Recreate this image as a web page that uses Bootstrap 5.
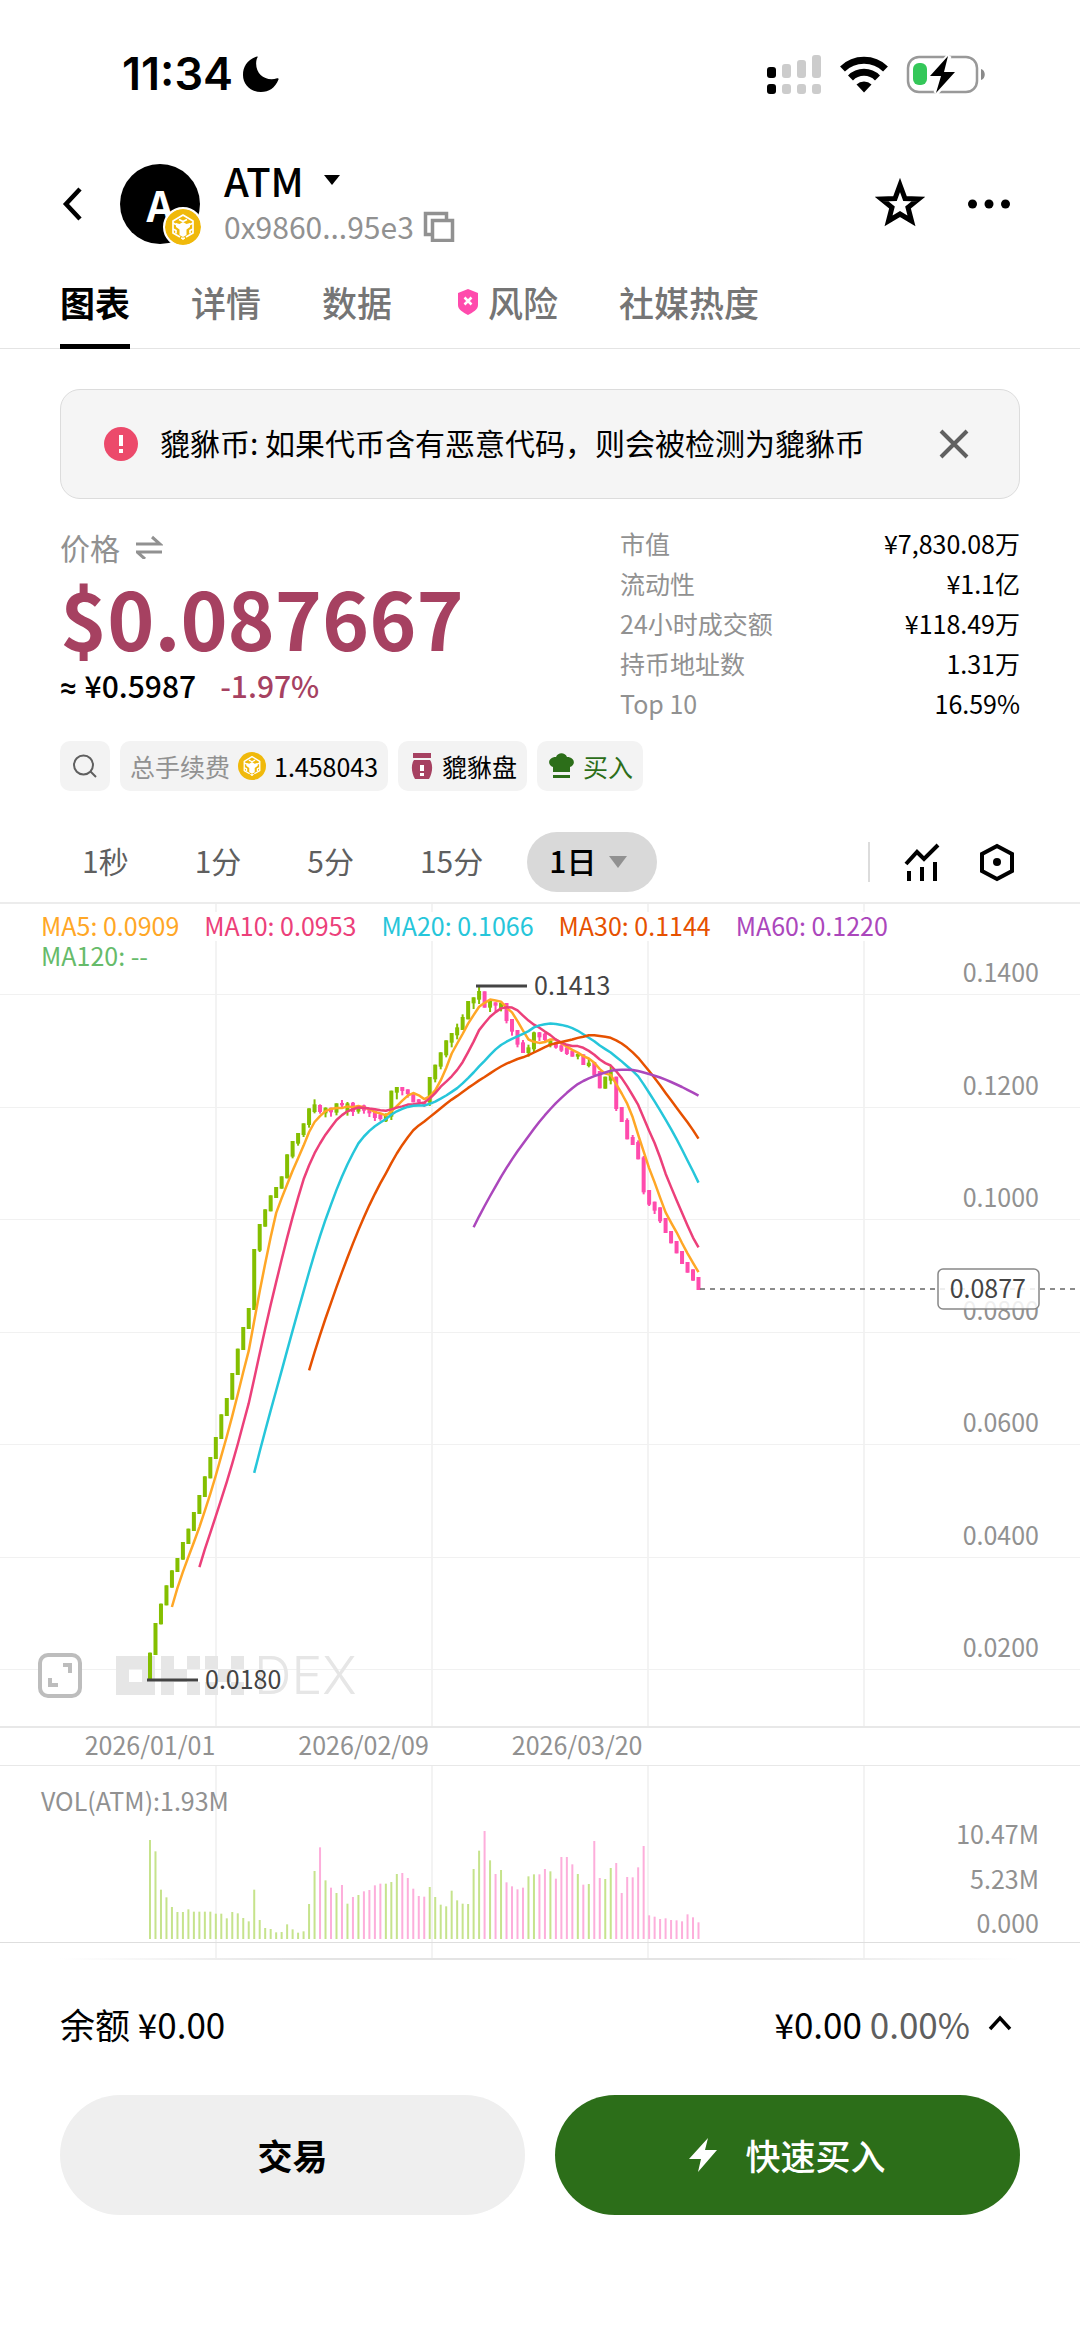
<!DOCTYPE html>
<html lang="zh-CN">
<head>
<meta charset="utf-8">
<meta name="viewport" content="width=device-width, initial-scale=1">
<title>ATM</title>
<link href="https://cdn.jsdelivr.net/npm/bootstrap@5.3.0/dist/css/bootstrap.min.css" rel="stylesheet">
<style>
  :root { --muted: #919191; --soft: #5f5f5f; --down: #a64161; --green: #2c6e19; --line: #e8e8e8; }
  body { font-family: "Noto Sans CJK SC", sans-serif; font-size: 25px; line-height: 40px; color: #000; background: #fff; }
  a { color: inherit; text-decoration: none; }
  svg { display: block; flex: none; }
  button { color: inherit; }
  .side { padding-left: 60px; padding-right: 60px; }
  .plain { border: 0; background: none; padding: 0; }
  .t30 { font-size: 30px; }
  .t35 { font-size: 35px; }
  .muted { color: var(--muted); }
  .down { color: var(--down); }
  .medium { font-weight: 500; }

  .statusbar { height: 147px; padding: 0 94px 0 122px; }
  .clock { font: 600 45px/56px Inter, sans-serif; }

  .topbar { height: 113px; }
  .avatar { width: 80px; height: 80px; border-radius: 50%; background: #000; color: #fff; font-size: 42px; font-weight: 700; }
  .chain { position: absolute; right: -3px; bottom: -3px; width: 40px; height: 40px; border: 2px solid #fff; border-radius: 50%; background: #fff; }
  .names { padding-bottom: 3px; }
  .token { font-size: 40px; line-height: 48px; }
  .addr { line-height: 44px; }
  .more { margin-left: 41px; }

  .tabs { gap: 61px; border-bottom: 1px solid #e4e4e4; }
  .tabs a { padding: 16px 0; line-height: 52px; color: #757575; border-bottom: 5px solid transparent; margin-bottom: -1px; }
  .tabs a.current { color: #000; font-weight: 700; border-color: #000; }

  .notice { margin-top: 40px; min-height: 110px; padding: 0 50px 0 43px; background: #f5f5f5; border: 1px solid #dcdcdc; border-radius: 20px; }
  .notice-text { margin-left: 22px; padding-bottom: 4px; }

  .quote { margin-top: 24px; }
  .quote-main { padding-top: 4px; }
  .big { margin-top: 2px; font-size: 80px; line-height: 94px; }
  .approx { line-height: 44px; gap: 24px; }
  .approx-sign { font-family: Roboto, sans-serif; }
  .stats { width: 400px; }

  .chips { margin-top: 18px; gap: 10px; }
  .chip { height: 50px; padding: 0 10px; gap: 8px; background: #f3f3f3; border-radius: 10px; }
  .chip-find { width: 50px; }

  .ranges { margin-top: 41px; padding: 0 63px 10px 60px; border-bottom: 2px solid #ececec; }
  .range { height: 60px; padding: 0 22px 4px; margin-right: 22px; color: var(--soft); }
  .range-on { height: 60px; padding: 0 30px 0 22px; gap: 13px; border-radius: 30px; background: #d9d9d9; color: #000; }
  .range-on span { padding-bottom: 4px; }
  .rule { width: 2px; height: 40px; background: #dcdcdc; }
  .gear { margin-left: 35px; }

  .legend { position: absolute; left: 0; top: 6px; right: 0; padding: 0 150px 0 41px; column-gap: 25px; line-height: 30px; }
  .plot { width: 100%; height: auto; }
  .plot text { font-family: "Noto Sans CJK SC", sans-serif; font-size: 25px; fill: var(--muted); }
  .plot .tag { fill: #444; }
  .plot .wm { font-family: Inter, sans-serif; font-size: 52px; font-weight: 300; fill: #e6e6e6; }
  .expand { position: absolute; left: 38px; bottom: 28px; }
  .dates { height: 40px; padding-left: 4%; border-top: 2px solid var(--line); border-bottom: 1px solid var(--line); }
  .dates > span { width: 20.600%; line-height: 32px; text-align: center; }
  .fade-line { height: 2px; margin: 0 60px; background: linear-gradient(90deg, #fff, #e4e4e4 25%, #e4e4e4 75%, #fff); }

  .balance { margin-top: 38px; line-height: 52px; }
  .actions { margin-top: 45px; gap: 30px; padding-bottom: 120px; }
  .act { height: 120px; border-radius: 60px; gap: 28px; font-size: 35px; font-weight: 500; }
  .act-trade, .act-trade:hover { background: #efefef; color: #000; font-weight: 700; }
  .act-buy, .act-buy:hover { background: var(--green); color: #fff; }
</style>
<script src="https://cdn.jsdelivr.net/npm/bootstrap@5.3.0/dist/js/bootstrap.bundle.min.js"></script>
</head>
<body>

<svg width="0" height="0" class="position-absolute" aria-hidden="true">
  <symbol id="bnb" viewBox="0 0 36 36">
    <circle cx="18" cy="18" r="18" fill="#f0b90b"/>
    <g fill="none" stroke="#fff" stroke-width="1.700" stroke-linejoin="round">
      <path d="M15 28l-7-4V12l10-6 10 6v12l-7 4"/>
      <path d="M14 10.500l4 2 4-2M8 14l4 2v2M28 14l-4 2v2M8 20l3 1.500v3M28 20l-3 1.500v3"/>
    </g>
    <path d="M18 13l3.500 2 3.500-1v4l-3.500 2.500V26L18 28l-3.500-2v-5.500L11 18v-4l3.500 1z" fill="#fff"/>
    <path d="M16 29h4l-2 1.500z" fill="#fff" stroke="#fff"/>
  </symbol>
</svg>

<div class="statusbar d-flex align-items-center justify-content-between">
  <div class="d-flex align-items-center gap-2">
    <span class="clock">11:34</span>
    <svg width="40" height="38" viewBox="0 0 40 38"><path d="M16 1.500C6 5 2 12 2 20c0 10 8 17 18 17 8 0 14-4 17.500-12.500.4-1-.4-1.600-1.400-1.200C24 27 13 18 15.500 5c.3-1.200.6-2 1-2.600.3-.7.200-1.200-.5-.9z"/></svg>
  </div>
  <div class="d-flex align-items-center">
    <svg width="55" height="40" viewBox="0 0 55 40">
      <g><rect x="0" y="13" width="9" height="11" rx="3"/><rect x="0" y="30" width="9" height="10" rx="3"/></g>
      <g fill="#ccc"><rect x="15" y="10" width="9" height="14" rx="3"/><rect x="30" y="6" width="9" height="18" rx="3"/><rect x="45" y="1" width="9" height="23" rx="3"/><rect x="15" y="30" width="9" height="10" rx="3"/><rect x="30" y="30" width="9" height="10" rx="3"/><rect x="45" y="30" width="9" height="10" rx="3"/></g>
    </svg>
    <svg class="mx-3" width="52" height="38" viewBox="0 0 52 38"><g fill="none" stroke="#000" stroke-width="7"><path d="M4.500 14a31 31 0 0 1 43 0"/><path d="M12.500 23a19 19 0 0 1 27 0"/></g><path d="M18.500 29.500a11 11 0 0 1 15 0L26 37.500z"/></svg>
    <svg width="80" height="40" viewBox="0 0 80 40">
      <rect x="2" y="3" width="69" height="35" rx="11" fill="none" stroke="#999" stroke-width="2.500"/>
      <path d="M75 15c5 1 5 10 0 11z" fill="#8a8a8a"/>
      <path d="M43 2L24 22h11l-5 17 19-21H38z" stroke="#fff" stroke-width="5"/>
      <rect x="7" y="9" width="14" height="22" rx="6" fill="#34c759"/>
      <path d="M42 2L24 22h11l-5 17 19-21H38z"/>
    </svg>
  </div>
</div>

<header class="topbar side d-flex align-items-center">
  <button class="plain" aria-label="返回"><svg width="60" height="40" viewBox="0 0 60 40"><path d="M20 5L6 20l14 15" fill="none" stroke="#000" stroke-width="4.500"/></svg></button>
  <div class="avatar position-relative d-flex align-items-center justify-content-center">A<svg class="chain"><use href="#bnb"/></svg></div>
  <div class="names ms-4">
    <button class="plain token medium d-flex align-items-center gap-3">ATM<svg width="24" height="12" viewBox="0 0 24 12"><path d="M4 1h16l-8 10z"/></svg></button>
    <div class="addr t30 muted d-flex align-items-center">0x9860...95e3
      <button class="plain ms-2" aria-label="复制"><svg width="34" height="32" viewBox="1 -1 34 32"><path d="M10.500 23.500H4.500V2.500h21v6M11.500 9.500h20v20h-20z" fill="none" stroke="#919191" stroke-width="3.500"/></svg></button>
    </div>
  </div>
  <button class="plain ms-auto" aria-label="收藏"><svg width="50" height="52" viewBox="0 0 50 52"><path d="M25 7l5 13.500 13.500.5-10.500 8.500 3.500 13.500L25 36l-11.500 7 3.500-13.500L6.500 21l13.500-.5z" fill="none" stroke="#000" stroke-width="5"/></svg></button>
  <button class="plain more pe-2" aria-label="更多"><svg width="46" height="12" viewBox="0 0 46 12"><circle cx="6.500" cy="6" r="4.500"/><circle cx="23" cy="6" r="4.500"/><circle cx="39.500" cy="6" r="4.500"/></svg></button>
</header>

<nav class="tabs side d-flex t35 medium">
  <a class="current" href="#">图表</a>
  <a href="#">详情</a>
  <a href="#">数据</a>
  <a class="d-flex align-items-center" href="#"><svg width="35" height="28" viewBox="0 0 35 28"><path d="M15 1l10 4v12c0 5-5 7-10 10-5-3-10-5-10-10V5z" fill="#ff4bad"/><path d="M11.500 9.500l7 7M18.500 9.500l-7 7" stroke="#fff" stroke-width="2.500"/></svg>风险</a>
  <a href="#">社媒热度</a>
</nav>

<main>
  <div class="side">
    <div class="notice d-flex align-items-center t30" role="alert">
      <svg width="34" height="34" viewBox="0 0 34 34"><circle cx="17" cy="17" r="17" fill="#ec4a6b"/><path d="M15 8h4v11h-4zM15 22h4v4h-4z" fill="#fff"/></svg>
      <span class="notice-text flex-grow-1">貔貅币: 如果代币含有恶意代码，则会被检测为貔貅币</span>
      <button class="plain" aria-label="关闭"><svg width="30" height="30" viewBox="0 0 30 30"><path d="M2 2l26 26M28 2L2 28" stroke="#606060" stroke-width="4"/></svg></button>
    </div>

    <section class="quote d-flex justify-content-between">
      <div class="quote-main">
        <button class="plain t30 muted d-flex align-items-center">价格<svg class="ms-3" width="27" height="24" viewBox="1 -1 27 24"><path d="M0 8h25L17 1M27 16H2l8 7" fill="none" stroke="#919191" stroke-width="3"/></svg></button>
        <div class="big fw-bold down">$0.087667</div>
        <div class="approx t30 medium d-flex"><span><span class="approx-sign">≈ </span>¥0.5987</span><span class="down">-1.97%</span></div>
      </div>
      <div class="stats">
        <div class="d-flex justify-content-between"><span class="muted">市值</span><span>¥7,830.08万</span></div>
        <div class="d-flex justify-content-between"><span class="muted">流动性</span><span>¥1.1亿</span></div>
        <div class="d-flex justify-content-between"><span class="muted">24小时成交额</span><span>¥118.49万</span></div>
        <div class="d-flex justify-content-between"><span class="muted">持币地址数</span><span>1.31万</span></div>
        <div class="d-flex justify-content-between"><span class="muted">Top 10</span><span>16.59%</span></div>
      </div>
    </section>

    <div class="chips d-flex">
      <button class="plain chip chip-find d-flex align-items-center justify-content-center" aria-label="搜索"><svg width="24" height="24" viewBox="0 0 24 24"><g fill="none" stroke="#5f5f5f" stroke-width="2"><circle cx="10.500" cy="11" r="9.500"/><path d="M17.500 17.500L23 23"/></g></svg></button>
      <div class="chip d-flex align-items-center"><span class="muted">总手续费</span><svg width="28" height="28"><use href="#bnb"/></svg><span>1.458043</span></div>
      <div class="chip d-flex align-items-center"><svg width="26" height="28" viewBox="-2 0 26 28"><path d="M3 1h18v5H3zM4 8h16c3 4 3 12-1 19H5C1 20 1 12 4 8z" fill="#a64161"/><path d="M10 13h4v6h-4zM10 21h4v3h-4z" fill="#fff"/></svg>貔貅盘</div>
      <div class="chip d-flex align-items-center" style="color:var(--green)"><svg width="28" height="26" viewBox="-1 0 28 26"><path d="M5 19v-5C-1 12 0 4 8 4c2-5 9-5 11 0 8 0 9 8 3 10v5zM5 22h17v3H5z" fill="#2c6e19"/></svg>买入</div>
    </div>
  </div>

  <div class="ranges t30 d-flex align-items-center">
    <button class="plain range">1秒</button>
    <button class="plain range">1分</button>
    <button class="plain range">5分</button>
    <button class="plain range">15分</button>
    <button class="plain range-on medium d-flex align-items-center"><span>1日</span><svg width="18" height="12" viewBox="0 0 18 12"><path d="M0 0h18L9 12z" fill="#919191"/></svg></button>
    <span class="rule ms-auto me-4"></span>
    <button class="plain ms-2" aria-label="指标"><svg width="40" height="40" viewBox="0 0 40 40"><path d="M4 22L15 10l7 7L36 3M7 29v10M20 25v14M33 20v19" fill="none" stroke="#000" stroke-width="4"/></svg></button>
    <button class="plain gear" aria-label="设置"><svg width="40" height="40" viewBox="0 0 40 40"><path d="M20 4l15 8v17l-15 8-15-8V12z" fill="none" stroke="#000" stroke-width="4"/><circle cx="20" cy="20" r="4"/></svg></button>
  </div>

  <section>
    <div class="position-relative">
      <svg id="price" class="plot" viewBox="0 0 1080 822"></svg>
      <div class="legend d-flex flex-wrap">
        <span style="color:#ffa726">MA5: 0.0909</span>
        <span style="color:#ec407a">MA10: 0.0953</span>
        <span style="color:#26c6da">MA20: 0.1066</span>
        <span style="color:#e65100">MA30: 0.1144</span>
        <span style="color:#ab47bc">MA60: 0.1220</span>
        <span style="color:#66bb6a">MA120: --</span>
      </div>
      <button class="plain expand" aria-label="全屏"><svg width="44" height="46" viewBox="0 0 44 46"><rect x="2" y="3" width="40" height="41" rx="8" fill="#fff" stroke="#bdbdbd" stroke-width="4"/><path d="M25 13h7v8M12 26v7h8" fill="none" stroke="#bdbdbd" stroke-width="4"/></svg></button>
    </div>
    <div class="dates muted d-flex"><span>2026/01/01</span><span>2026/02/09</span><span>2026/03/20</span></div>
    <svg id="volume" class="plot" viewBox="0 0 1080 192"></svg>
    <div class="fade-line"></div>
  </section>
</main>

<footer class="side">
  <div class="balance t35 d-flex align-items-center justify-content-between">
    <span>余额 ¥0.00</span>
    <button class="plain d-flex align-items-center">¥0.00&nbsp;<span style="color:var(--soft)">0.00%</span><svg class="ms-3" width="34" height="20" viewBox="0 0 34 20"><path d="M4 15L14 4l10 11" fill="none" stroke="#000" stroke-width="3.500"/></svg></button>
  </div>
  <div class="actions d-flex">
    <button class="btn act act-trade flex-fill w-50">交易</button>
    <button class="btn act act-buy flex-fill w-50 d-flex align-items-center justify-content-center"><svg width="28" height="34" viewBox="0 0 28 34"><path d="M19 0L0 21h12L9 34l19-22H16z" fill="#fff"/></svg>快速买入</button>
  </div>
</footer>

<script>
// Candles: direction, body top, body bottom, optional high and low; three units to a plot pixel.
const candles = `u 2078 2163|u 1989 2085|u 1931 1993|u 1876 1936|u 1831 1883|u 1794 1836|u 1746 1799|u 1706 1752|u 1656 1713|u 1605 1662
u 1549 1611|u 1491 1555|u 1431 1497|u 1363 1437|u 1314 1368|u 1239 1319|u 1166 1245|u 1101 1170|u 1044 1107|u 867 1050
u 792 872 792 876|u 748 800|u 706 754|u 681 714|u 649 686|u 583 655|u 543 590 543 595|u 519 551 519 557|u 490 525 490 531|u 445 495 445 503
u 433 456 418 460|d 435 456 433 461|u 443 460 442 472|d 443 457 443 470|u 430 458 430 466|d 429 436 420 447|u 430 456 426 467|d 428 456 426 468|u 438 455 436 461|d 436 452 434 461
d 446 460 444 471|d 452 474 452 483|d 463 477 461 482|u 468 484 460 486|u 392 470 392 480|u 381 398 381 418|d 381 393 381 406|d 388 402 388 413|d 400 427|d 418 427 417 437
d 427 437 427 441|u 351 428 351 438|u 314 358 314 367|u 277 320 277 328|u 241 286 241 292|u 219 248 219 262|u 202 226 191 238|u 171 210 163 210|u 123 178|u 112 130 112 147
u 93 119 80 132|d 94 143|u 123 143 123 156|d 127 137 127 156|u 128 145 128 154|d 129 183 129 190|d 177 215 177 227|d 210 254 210 262|d 247 279 240 279|u 262 279 254 290
u 217 268 215 277|d 217 232 216 243|d 221 240 219 244|u 242 256 238 262|d 247 263 245 266|d 256 272 250 276|d 262 282 256 285|d 272 290|u 282 290 278 298|d 283 315
u 308 318 296 322|d 306 346|d 333 385|u 350 386|u 334 362 318 373|d 350 447 350 453|d 441 486|d 480 538 475 538|d 531 555 525 555|d 546 598 541 598
d 592 697 588 703|d 690 734 690 738|d 725 752 725 762|d 742 784 742 789|d 774 819|d 813 850|d 843 880|d 873 912|d 906 938|d 928 962|d 951 990`
  .split(/[|\n]/).map(s => { const [d, ...n] = s.trim().split(' '); const [t, b, h = t, l = b] = n.map(Number); return { up: d === 'u', t, b, h, l }; });

// Volume bar heights, three units to a plot pixel.
const volumes = [297,263,148,125,96,81,81,89,82,82,82,82,76,76,62,81,77,63,53,148,57,33,30,20,21,44,29,19,23,105,
  204,275,176,154,138,162,106,126,132,143,147,161,166,166,171,195,198,183,151,129,127,156,126,103,98,145,116,106,105,210,
  265,324,236,195,207,170,158,149,154,188,194,194,210,203,181,246,246,224,195,163,165,294,183,180,213,228,138,186,185,215,
  279,71,67,60,62,57,56,53,74,65,50];

const X = i => 150 + i * 5.485, Y = v => v / 3 + 56;
const line = (x1, y1, x2, y2, stroke, w, extra = '') => `<path d="M${x1} ${y1}L${x2} ${y2}" stroke="${stroke}" stroke-width="${w}" ${extra}/>`;
const rect = (x, y, w, h, fill) => `<rect x="${x}" y="${y}" width="${w}" height="${h}" fill="${fill}"/>`;
const label = (x, y, s, cls = '', anchor = 'end') => `<text x="${x}" y="${y}" text-anchor="${anchor}" class="${cls}">${s}</text>`;

let p = '';
for (const x of [216, 432, 648, 864]) p += line(x, 0, x, 8, '#f3f3f3', 2) + line(x, 37, x, 822, '#f3f3f3', 2);
for (let k = 0; k < 7; k++) {
  const y = Math.round(90 + k * 112.500);
  p += rect(0, y, 1080, 1, '#f1f1f1') + label(1039, y - 12, (0.14 - k * 0.02).toFixed(4));
}
// Watermark
const cell = 13, mark = [[116, '111101111'], [161, '101110101'], [205, '101010101']];
for (const [x0, bits] of mark) [...bits].forEach((b, n) => { if (b === '1') p += rect(x0 + n % 3 * cell, 752 + Math.floor(n / 3) * cell, cell, cell, '#e6e6e6'); });
p += label(254, 790, 'DEX', 'wm', 'start');
// Candles
candles.forEach((c, i) => {
  const col = c.up ? '#84bf00' : '#ff4bad', x = X(i);
  p += rect(x - 1, Y(c.h), 2, (c.l - c.h) / 3, col) + rect(x - 2, Y(c.t), 4, (c.b - c.t) / 3, col);
});
// Moving averages of the closing price
const close = candles.map(c => c.up ? c.t : c.b);
for (const [n, col] of [[5, '#ffa726'], [10, '#ec407a'], [20, '#26c6da'], [30, '#e65100'], [60, '#ab47bc']]) {
  const pts = [];
  for (let i = n - 1; i < close.length; i++)
    pts.push(X(i).toFixed(1) + ',' + Y(close.slice(i - n + 1, i + 1).reduce((a, b) => a + b) / n).toFixed(1));
  p += `<polyline points="${pts.join(' ')}" fill="none" stroke="${col}" stroke-width="2.500" stroke-linejoin="round"/>`;
}
// High and low marks, current price
p += line(476, 82, 527, 82, '#444', 3) + label(534, 91, '0.1413', 'tag', 'start');
p += line(147, 776, 198, 776, '#444', 3) + label(205, 785, '0.0180', 'tag', 'start');
p += line(700, 385, 1080, 385, '#666', 1.5, 'stroke-dasharray="5 5"');
p += '<rect x="938" y="365" width="101" height="40" rx="5" fill="#fff" fill-opacity=".85" stroke="#888" stroke-width="1.500"/>';
p += label(1026, 394, '0.0877', 'tag');
document.getElementById('price').innerHTML = p;

let v = '';
for (const x of [216, 432, 648, 864]) v += line(x, 0, x, 192, '#f3f3f3', 2);
volumes.forEach((h, i) => v += rect(X(i) - 1, 173 - h / 3, 2, h / 3, candles[i].up ? '#c6e38c' : '#fdaedb'));
v += rect(0, 176, 1080, 1, '#dedede') + label(41, 45, 'VOL(ATM):1.93M', '', 'start');
v += label(1039, 78, '10.47M') + label(1039, 123, '5.23M') + label(1039, 167, '0.000');
document.getElementById('volume').innerHTML = v;
</script>
</body>
</html>
